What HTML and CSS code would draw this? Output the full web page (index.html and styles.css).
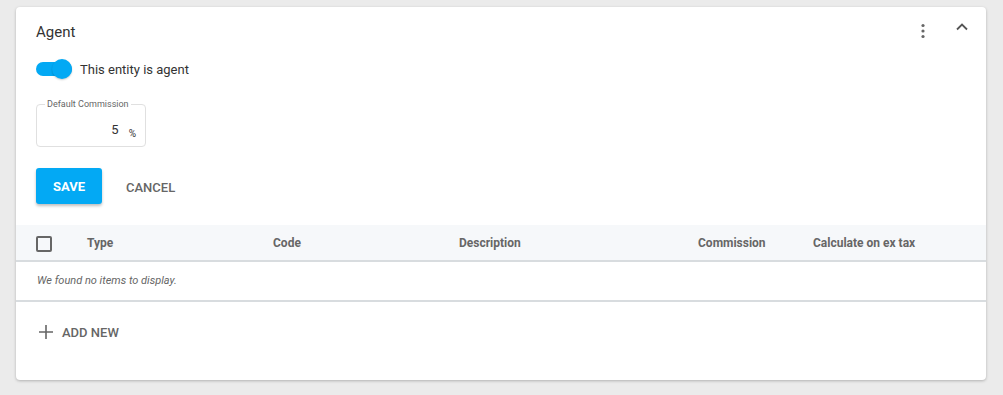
FILE: index.html
```
<!DOCTYPE html>
<html lang="en">
<head>
    <meta charset="UTF-8">
    <title>Agent</title>
    <link rel="stylesheet" href="styles.css">
</head>
<body>
    <div class="card">
        <div class="card-header">
            <h2 class="card-title">Agent</h2>
            <div class="card-tools">
                <button class="icon-btn" aria-label="More">
                    <svg width="16" height="16" viewBox="0 0 16 16"><circle cx="8" cy="2.5" r="1.6" fill="#666"/><circle cx="8" cy="8" r="1.6" fill="#666"/><circle cx="8" cy="13.5" r="1.6" fill="#666"/></svg>
                </button>
                <button class="icon-btn" aria-label="Collapse">
                    <svg width="14" height="14" viewBox="0 0 14 14"><path d="M2 9.5 L7 4.5 L12 9.5" fill="none" stroke="#555" stroke-width="1.8"/></svg>
                </button>
            </div>
        </div>

        <div class="card-body">
            <label class="switch-row">
                <span class="switch"><span class="switch-thumb"></span></span>
                <span class="switch-label">This entity is agent</span>
            </label>

            <fieldset class="field">
                <legend class="field-label">Default Commission</legend>
                <span class="field-value">5</span>
                <span class="field-suffix">%</span>
            </fieldset>

            <div class="form-actions">
                <button class="btn btn-primary">SAVE</button>
                <button class="btn btn-flat">CANCEL</button>
            </div>
        </div>

        <div class="grid">
            <div class="grid-head">
                <span class="checkbox"></span>
                <span>Type</span>
                <span>Code</span>
                <span>Description</span>
                <span>Commission</span>
                <span>Calculate on ex tax</span>
            </div>
            <div class="grid-empty">We found no items to display.</div>
        </div>

        <div class="grid-footer">
            <button class="add-btn">
                <svg width="16" height="16" viewBox="0 0 16 16"><path d="M8 1 V15 M1 8 H15" stroke="#666" stroke-width="1.6"/></svg>
                ADD NEW
            </button>
        </div>
    </div>
</body>
</html>
```

FILE: styles.css
```
* {
    margin: 0;
    padding: 0;
    box-sizing: border-box;
}

body {
    font-family: Roboto, 'Liberation Sans', sans-serif;
    background: #ebebeb;
    color: #333;
    padding: 7px 17px 15px 16px;
}

button {
    font-family: inherit;
    background: none;
    border: none;
    cursor: pointer;
}

.card {
    background: #fff;
    border-radius: 4px;
    box-shadow: 0 1px 3px rgba(0, 0, 0, 0.25);
    height: 373px;
}

.card-header {
    display: flex;
    align-items: center;
    justify-content: space-between;
    padding: 14px 17px 0 20px;
    height: 36px;
}

.card-title {
    font-size: 15px;
    font-weight: 400;
    line-height: 22px;
    color: #333;
}

.card-tools {
    display: flex;
    align-items: center;
    gap: 24px;
    margin-top: -2px;
}

.icon-btn {
    display: flex;
    align-items: center;
    justify-content: center;
}

.icon-btn:last-child {
    margin-top: -8px;
}

.card-body {
    padding: 16px 20px 0;
}

.switch-row {
    display: flex;
    align-items: center;
    gap: 8px;
    height: 20px;
}

.switch {
    position: relative;
    width: 36px;
    height: 14px;
    border-radius: 7px;
    background: #03a9f4;
}

.switch-thumb {
    position: absolute;
    right: 0;
    top: -3px;
    width: 20px;
    height: 20px;
    border-radius: 50%;
    background: #03a9f4;
    box-shadow: 0 1px 2px rgba(0, 0, 0, 0.2);
}

.switch-label {
    font-size: 13px;
    color: #333;
}

.field {
    width: 110px;
    height: 48px;
    margin-top: 20px;
    border: 1px solid #e0e0e0;
    border-radius: 4px;
    padding: 0 9px 4px 8px;
    display: flex;
    align-items: flex-end;
    justify-content: flex-end;
    gap: 10px;
}

.field-label {
    font-size: 9px;
    color: #666;
    padding: 0 2px;
}

.field-value {
    font-size: 13px;
    line-height: 16px;
    color: #333;
    margin-bottom: 4px;
}

.field-suffix {
    font-size: 10px;
    line-height: 12px;
    color: #333;
    margin-bottom: 2px;
}

.form-actions {
    display: flex;
    align-items: center;
    gap: 8px;
    margin-top: 20px;
}

.btn {
    height: 36px;
    padding: 0 16px;
    border-radius: 3px;
    font-size: 13px;
    font-weight: 500;
}

.btn-primary {
    width: 66px;
    background: #03a9f4;
    color: #fff;
    font-weight: 700;
    box-shadow: 0 2px 3px rgba(0, 0, 0, 0.25);
}

.btn-flat {
    color: #666;
    padding: 0 16px;
    margin-top: 2px;
}

.grid {
    margin-top: 20px;
}

.grid-head {
    display: grid;
    grid-template-columns: 51px 186px 186px 239px 115px 1fr;
    align-items: center;
    height: 37px;
    padding-left: 20px;
    background: #f6f8fa;
    border-bottom: 2px solid #d8dcdf;
    font-size: 12px;
    font-weight: 700;
    color: #666;
}

.checkbox {
    width: 16px;
    height: 16px;
    border: 2px solid #666;
    border-radius: 2px;
    margin-top: 2px;
}

.grid-empty {
    height: 40px;
    line-height: 38px;
    padding-left: 21px;
    font-size: 11px;
    font-style: italic;
    color: #666;
    border-bottom: 2px solid #d8dcdf;
}

.grid-footer {
    padding: 22px 20px 0 22px;
}

.add-btn {
    display: flex;
    align-items: center;
    gap: 8px;
    font-size: 13px;
    font-weight: 500;
    color: #666;
}
```
